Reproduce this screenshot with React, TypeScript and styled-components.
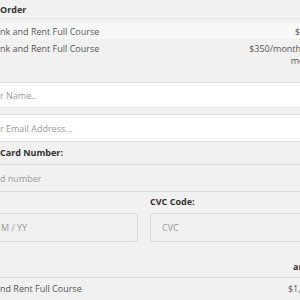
import { createGlobalStyle, styled } from "styled-components";

const GlobalStyle = createGlobalStyle`
    html, body {
        margin: 0;
        padding: 0;
        background: #f1f1f1;
        overflow: hidden;
    }
    body {
        font-family: "Open Sans", "DejaVu Sans", sans-serif;
        font-size: 9px;
        color: #555;
    }
`

const App = () => {
    return (
        <>
            <GlobalStyle />
            <Page>
                <OrderTable>
                    <HeadRow>
                        <HeadCell>Order</HeadCell>
                        <HeadCell />
                    </HeadRow>
                    <Row $striped>
                        <Cell>nk and Rent Full Course</Cell>
                        <PriceCell>$1,400</PriceCell>
                    </Row>
                    <Row $tall>
                        <Cell>nk and Rent Full Course</Cell>
                        <PriceCell>$350/month for 4<br />months</PriceCell>
                    </Row>
                </OrderTable>

                <NameInput placeholder="r Name.." />
                <EmailInput placeholder="r Email Address..." />

                <Label>Card Number:</Label>
                <CardInput placeholder="d number" />

                <SplitRow>
                    <Field>
                        <Label $small>&nbsp;</Label>
                        <BoxInput placeholder="M / YY" />
                    </Field>
                    <Field>
                        <Label $small $inset>CVC Code:</Label>
                        <BoxInput $inset placeholder="CVC" />
                    </Field>
                </SplitRow>

                <SummaryTable>
                    <SummaryHead>
                        <HeadCell />
                        <SummaryHeadCell>ar</SummaryHeadCell>
                    </SummaryHead>
                    <SummaryRow>
                        <Cell>nd Rent Full Course</Cell>
                        <SummaryPrice>$1,400</SummaryPrice>
                    </SummaryRow>
                </SummaryTable>
            </Page>
        </>
    );
};

export default App;

const Page = styled.main`
    width: 340px;
    margin-left: -12px;
    display: flex;
    flex-direction: column;
`

const OrderTable = styled.section`
    display: flex;
    flex-direction: column;
    border-bottom: 1px solid #dcdcdc;
`

const HeadRow = styled.div`
    display: grid;
    grid-template-columns: 1fr 110px;
    height: 18px;
    border-bottom: 1px solid #e4e4e4;
    margin-bottom: 5px;
`

const HeadCell = styled.div`
    padding-left: 12px;
    line-height: 19px;
    font-weight: 700;
    color: #333;
`

const Row = styled.div<{ $striped?: boolean; $tall?: boolean }>`
    display: grid;
    grid-template-columns: 1fr 110px;
    height: ${({ $tall }) => ($tall ? "39px" : "15px")};
    padding-top: ${({ $tall }) => ($tall ? "4px" : "0")};
    background: ${({ $striped }) => ($striped ? "#f8f8f8" : "transparent")};
    line-height: ${({ $tall }) => ($tall ? "12px" : "15px")};
`

const Cell = styled.div`
    padding-left: 12px;
    white-space: nowrap;
`

const PriceCell = styled.div`
    text-align: right;
    padding-right: 5px;
`

const inputBase = `
    display: block;
    box-sizing: border-box;
    width: 100%;
    margin: 0;
    padding: 0 12px;
    font-family: "Open Sans", "DejaVu Sans", sans-serif;
    font-size: 9px;
    color: #555;
    outline: none;
    &::placeholder {
        color: #9a9a9a;
    }
`

const NameInput = styled.input`
    ${inputBase}
    height: 25px;
    border: none;
    border-bottom: 1px solid #e6e6e6;
    background: #fff;
`

const EmailInput = styled.input`
    ${inputBase}
    height: 28px;
    margin-top: 6px;
    border: none;
    border-top: 1px solid #dcdcdc;
    border-bottom: 1px solid #dcdcdc;
    background: #fff;
`

const Label = styled.label<{ $small?: boolean; $inset?: boolean }>`
    display: block;
    height: ${({ $small }) => ($small ? "21px" : "22px")};
    line-height: ${({ $small }) => ($small ? "20px" : "22px")};
    padding-left: ${({ $inset }) => ($inset ? "0" : "12px")};
    font-weight: 700;
    color: #333;
`

const CardInput = styled.input`
    ${inputBase}
    height: 28px;
    border: none;
    border-top: 1px solid #dcdcdc;
    border-bottom: 1px solid #dcdcdc;
    background: transparent;
`

const SplitRow = styled.div`
    display: grid;
    grid-template-columns: 150px 1fr;
    gap: 12px;
`

const Field = styled.div`
    display: flex;
    flex-direction: column;
`

const BoxInput = styled.input<{ $inset?: boolean }>`
    ${inputBase}
    height: 29px;
    border: 1px solid #dadada;
    border-radius: 3px;
    background: #f1f1f1;
    padding-left: ${({ $inset }) => ($inset ? "11px" : "12px")};
`

const SummaryTable = styled.section`
    display: flex;
    flex-direction: column;
    margin-top: 15px;
`

const SummaryHead = styled.div`
    display: grid;
    grid-template-columns: 1fr 35px;
    height: 20px;
    border-bottom: 1px solid #dedede;
`

const SummaryHeadCell = styled.div`
    line-height: 19px;
    font-weight: 700;
    color: #333;
    white-space: nowrap;
`

const SummaryRow = styled.div`
    display: grid;
    grid-template-columns: 1fr 110px;
    height: 22px;
    line-height: 22px;
`

const SummaryPrice = styled.div`
    text-align: right;
    padding-right: 12px;
`
